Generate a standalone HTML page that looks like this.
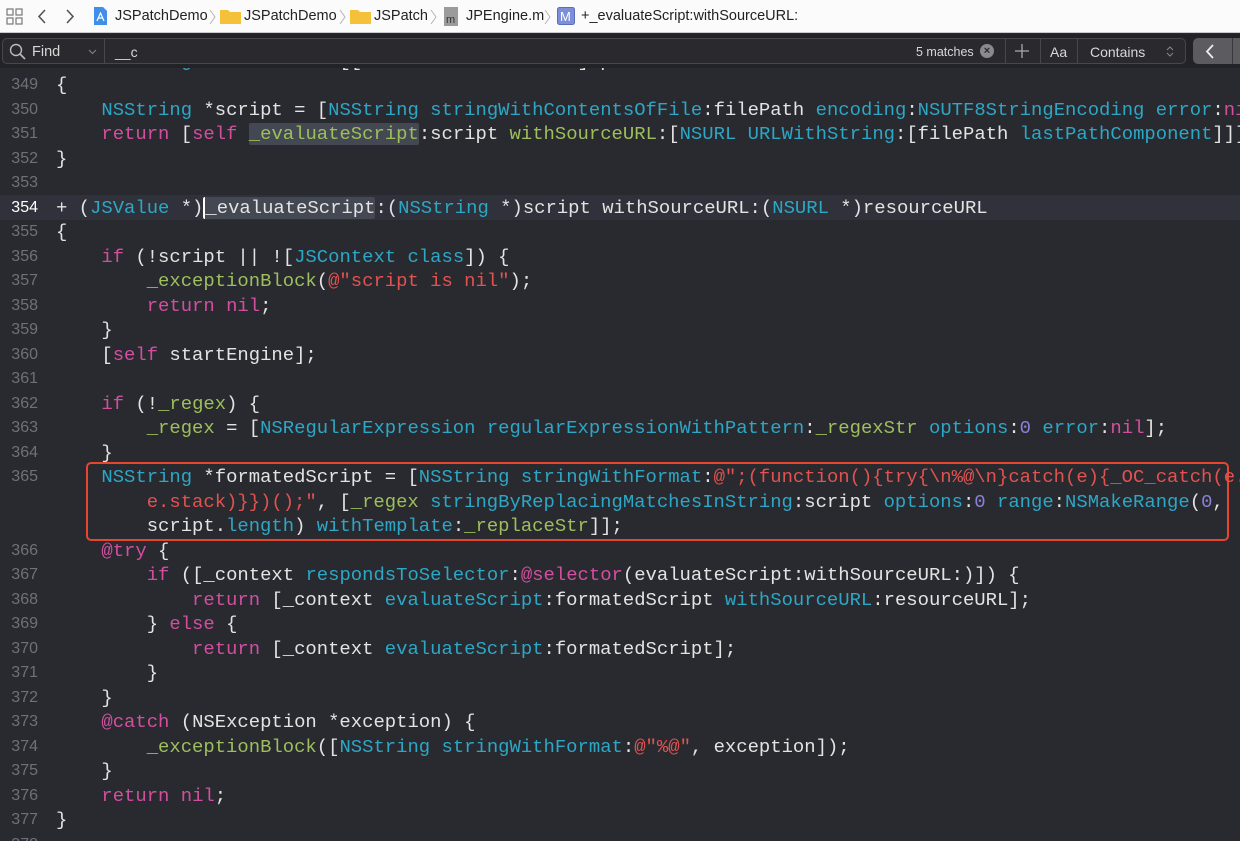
<!DOCTYPE html>
<html><head><meta charset="utf-8"><style>
*{margin:0;padding:0;box-sizing:border-box}
body{width:1240px;height:841px;overflow:hidden;background:#292a30;position:relative;font-family:"Liberation Sans",sans-serif}
#top{position:absolute;left:0;top:0;width:1240px;height:33px;background:#fbfbfb;border-bottom:1px solid #c9c9c9}
#top .tx{position:absolute;top:8px;font-size:14.5px;color:#222;white-space:nowrap}
#top .ch{position:absolute;top:9px;width:8px;height:16px}
#find{position:absolute;left:0;top:34px;width:1240px;height:34px;background:#232327}
#field{position:absolute;left:2px;top:4px;width:1184px;height:26px;border:1px solid #48484c;border-radius:5px;background:#2a2a2e}
#find .w{position:absolute;color:#d8d8d8;font-size:14px;top:10px;white-space:nowrap}
#code{position:absolute;left:0;top:68px;width:1240px;height:773px;overflow:hidden}
.l{position:absolute;left:0;width:1240px;height:24.5px;line-height:24.5px;white-space:pre;font-family:"Liberation Mono",monospace;font-size:18.9px;color:#e3e3e4}
.ln{position:absolute;left:0;width:38px;text-align:right;font-family:"Liberation Sans",sans-serif;font-size:16px;color:#6f7078}
.c{position:absolute;left:56px}
.k{color:#d24fa0}.t{color:#2ca7c6}.g{color:#9dbf5c}.s{color:#e2524f}.n{color:#8b80d6}
.hl{background:#444852;border-radius:2px}
</style></head><body>
<div id="top">
<svg style="position:absolute;left:6px;top:8px" width="17" height="17" viewBox="0 0 17 17" fill="none" stroke="#777" stroke-width="1.2"><rect x="1" y="1" width="6" height="6"/><rect x="10" y="1" width="6" height="6"/><rect x="1" y="10" width="6" height="6"/><rect x="10" y="10" width="6" height="6"/></svg>
<svg style="position:absolute;left:37px;top:9px" width="10" height="15" viewBox="0 0 10 15"><path d="M8 1L2 7.5L8 14" stroke="#555" stroke-width="1.6" fill="none"/></svg>
<svg style="position:absolute;left:65px;top:9px" width="10" height="15" viewBox="0 0 10 15"><path d="M2 1L8 7.5L2 14" stroke="#555" stroke-width="1.6" fill="none"/></svg>
<svg style="position:absolute;left:93px;top:6px" width="15" height="20" viewBox="0 0 15 20"><path d="M1 1H10L14 5V19H1Z" fill="#3f8ee8"/><path d="M4 15L7.5 7L11 15M5.5 12H9.5" stroke="#fff" stroke-width="1.2" fill="none"/></svg>
<span class="tx" style="left:115px">JSPatchDemo</span><svg class="ch" style="left:209px" viewBox="0 0 8 16"><path d="M1 1L6 8L1 15" stroke="#b5b5b5" fill="none"/></svg>
<svg style="position:absolute;left:220px;top:8px" width="21" height="16" viewBox="0 0 21 16"><path d="M0 2H8L10 4H21V16H0Z" fill="#f5c13a"/></svg>
<span class="tx" style="left:244px">JSPatchDemo</span><svg class="ch" style="left:339px" viewBox="0 0 8 16"><path d="M1 1L6 8L1 15" stroke="#b5b5b5" fill="none"/></svg>
<svg style="position:absolute;left:350px;top:8px" width="21" height="16" viewBox="0 0 21 16"><path d="M0 2H8L10 4H21V16H0Z" fill="#f5c13a"/></svg>
<span class="tx" style="left:374px">JSPatch</span><svg class="ch" style="left:430px" viewBox="0 0 8 16"><path d="M1 1L6 8L1 15" stroke="#b5b5b5" fill="none"/></svg>
<svg style="position:absolute;left:444px;top:7px" width="14" height="19" viewBox="0 0 14 19"><rect width="14" height="19" fill="#9b9b9b"/><text x="2" y="16" font-size="11" fill="#333" font-family="Liberation Sans">m</text></svg>
<span class="tx" style="left:466px">JPEngine.m</span><svg class="ch" style="left:544px" viewBox="0 0 8 16"><path d="M1 1L6 8L1 15" stroke="#b5b5b5" fill="none"/></svg>
<svg style="position:absolute;left:557px;top:7px" width="18" height="18" viewBox="0 0 18 18"><rect x=".5" y=".5" width="17" height="17" rx="2" fill="#7c8fd8" stroke="#5b6dbd"/><text x="3" y="14" font-size="13" fill="#fff" font-family="Liberation Sans">M</text></svg>
<span class="tx" style="left:581px">+_evaluateScript:withSourceURL:</span>
</div>
<div id="find">
<div id="field"></div>
<svg style="position:absolute;left:9px;top:9px" width="17" height="17" viewBox="0 0 17 17"><circle cx="7" cy="7" r="5.5" stroke="#bbb" stroke-width="1.4" fill="none"/><path d="M11 11L16 16" stroke="#bbb" stroke-width="1.6"/></svg>
<span class="w" style="left:32px;font-size:14.5px">Find</span>
<svg style="position:absolute;left:88px;top:15px" width="9" height="6" viewBox="0 0 9 6"><path d="M1 1L4.5 4.5L8 1" stroke="#888" fill="none"/></svg>
<div style="position:absolute;left:104px;top:5px;width:1px;height:25px;background:#48484c"></div>
<span class="w" style="left:115px">__c</span>
<span class="w" style="left:916px;font-size:12.5px;top:11px">5 matches</span>
<div style="position:absolute;left:980px;top:10px;width:14px;height:14px;border-radius:50%;background:#8a8a8e;color:#2a2a2e;font-size:11px;line-height:14px;text-align:center;font-weight:bold">×</div>
<div style="position:absolute;left:1005px;top:5px;width:1px;height:25px;background:#48484c"></div>
<svg style="position:absolute;left:1015px;top:10px" width="14" height="14" viewBox="0 0 14 14"><path d="M7 0V14M0 7H14" stroke="#aaa" stroke-width="1.3"/></svg>
<div style="position:absolute;left:1040px;top:5px;width:1px;height:25px;background:#48484c"></div>
<span class="w" style="left:1050px">Aa</span>
<div style="position:absolute;left:1077px;top:5px;width:1px;height:25px;background:#48484c"></div>
<span class="w" style="left:1090px">Contains</span>
<svg style="position:absolute;left:1166px;top:11px" width="8" height="13" viewBox="0 0 8 13"><path d="M1 5L4 2L7 5M1 8L4 11L7 8" stroke="#888" fill="none"/></svg>
<div style="position:absolute;left:1193px;top:4px;width:60px;height:26px;border-radius:5px;background:#5c5c60"></div>
<svg style="position:absolute;left:1205px;top:10px" width="10" height="15" viewBox="0 0 10 15"><path d="M8 1L2 7.5L8 14" stroke="#eee" stroke-width="1.8" fill="none"/></svg>
<div style="position:absolute;left:1232px;top:4px;width:1px;height:26px;background:#3a3a3e"></div>
</div>
<div id="code">
<div style="position:absolute;left:0;top:127px;width:1240px;height:25px;background:#2f323a"></div>
<div style="position:absolute;left:86px;top:394px;width:1143px;height:79px;border:2px solid #e8462c;border-radius:5px"></div>
<div class="l" style="top:-19.5px"><span class="ln">348</span><span class="c">    <span class="t">NSString</span> *filePath = [[<span class="t">NSBundle</span> <span class="t">mainBundle</span>] pathForResource</span></div>
<div class="l" style="top:5px"><span class="ln">349</span><span class="c">{</span></div>
<div class="l" style="top:29.5px"><span class="ln">350</span><span class="c">    <span class="t">NSString</span> *script = [<span class="t">NSString</span> <span class="t">stringWithContentsOfFile</span>:filePath <span class="t">encoding</span>:<span class="t">NSUTF8StringEncoding</span> <span class="t">error</span>:<span class="k">nil</span>];</span></div>
<div class="l" style="top:54px"><span class="ln">351</span><span class="c">    <span class="k">return</span> [<span class="k">self</span> <span class="g hl">_evaluateScript</span>:script <span class="g">withSourceURL</span>:[<span class="t">NSURL</span> <span class="t">URLWithString</span>:[filePath <span class="t">lastPathComponent</span>]]];</span></div>
<div class="l" style="top:78.5px"><span class="ln">352</span><span class="c">}</span></div>
<div class="l" style="top:103px"><span class="ln">353</span></div>
<div class="l" style="top:127.5px"><span class="ln" style="color:#fff">354</span><span class="c">+ (<span class="t">JSValue</span> *)<span class="hl" style="border-left:2px solid #fff">_evaluateScript</span>:(<span class="t">NSString</span> *)script withSourceURL:(<span class="t">NSURL</span> *)resourceURL</span></div>
<div class="l" style="top:152px"><span class="ln">355</span><span class="c">{</span></div>
<div class="l" style="top:176.5px"><span class="ln">356</span><span class="c">    <span class="k">if</span> (!script || ![<span class="t">JSContext</span> <span class="t">class</span>]) {</span></div>
<div class="l" style="top:201px"><span class="ln">357</span><span class="c">        <span class="g">_exceptionBlock</span>(<span class="s">@"script is nil"</span>);</span></div>
<div class="l" style="top:225.5px"><span class="ln">358</span><span class="c">        <span class="k">return</span> <span class="k">nil</span>;</span></div>
<div class="l" style="top:250px"><span class="ln">359</span><span class="c">    }</span></div>
<div class="l" style="top:274.5px"><span class="ln">360</span><span class="c">    [<span class="k">self</span> startEngine];</span></div>
<div class="l" style="top:299px"><span class="ln">361</span></div>
<div class="l" style="top:323.5px"><span class="ln">362</span><span class="c">    <span class="k">if</span> (!<span class="g">_regex</span>) {</span></div>
<div class="l" style="top:348px"><span class="ln">363</span><span class="c">        <span class="g">_regex</span> = [<span class="t">NSRegularExpression</span> <span class="t">regularExpressionWithPattern</span>:<span class="g">_regexStr</span> <span class="t">options</span>:<span class="n">0</span> <span class="t">error</span>:<span class="k">nil</span>];</span></div>
<div class="l" style="top:372.5px"><span class="ln">364</span><span class="c">    }</span></div>
<div class="l" style="top:397px"><span class="ln">365</span><span class="c">    <span class="t">NSString</span> *formatedScript = [<span class="t">NSString</span> <span class="t">stringWithFormat</span>:<span class="s">@";(function(){try{\n%@\n}catch(e){_OC_catch(e.message, </span></span></div>
<div class="l" style="top:421.5px"><span class="c"><span class="s">        e.stack)}})();"</span>, [<span class="g">_regex</span> <span class="t">stringByReplacingMatchesInString</span>:script <span class="t">options</span>:<span class="n">0</span> <span class="t">range</span>:<span class="t">NSMakeRange</span>(<span class="n">0</span>,</span></div>
<div class="l" style="top:446px"><span class="c">        script.<span class="t">length</span>) <span class="t">withTemplate</span>:<span class="g">_replaceStr</span>]];</span></div>
<div class="l" style="top:470.5px"><span class="ln">366</span><span class="c">    <span class="k">@try</span> {</span></div>
<div class="l" style="top:495px"><span class="ln">367</span><span class="c">        <span class="k">if</span> ([_context <span class="t">respondsToSelector</span>:<span class="k">@selector</span>(evaluateScript:withSourceURL:)]) {</span></div>
<div class="l" style="top:519.5px"><span class="ln">368</span><span class="c">            <span class="k">return</span> [_context <span class="t">evaluateScript</span>:formatedScript <span class="t">withSourceURL</span>:resourceURL];</span></div>
<div class="l" style="top:544px"><span class="ln">369</span><span class="c">        } <span class="k">else</span> {</span></div>
<div class="l" style="top:568.5px"><span class="ln">370</span><span class="c">            <span class="k">return</span> [_context <span class="t">evaluateScript</span>:formatedScript];</span></div>
<div class="l" style="top:593px"><span class="ln">371</span><span class="c">        }</span></div>
<div class="l" style="top:617.5px"><span class="ln">372</span><span class="c">    }</span></div>
<div class="l" style="top:642px"><span class="ln">373</span><span class="c">    <span class="k">@catch</span> (NSException *exception) {</span></div>
<div class="l" style="top:666.5px"><span class="ln">374</span><span class="c">        <span class="g">_exceptionBlock</span>([<span class="t">NSString</span> <span class="t">stringWithFormat</span>:<span class="s">@"%@"</span>, exception]);</span></div>
<div class="l" style="top:691px"><span class="ln">375</span><span class="c">    }</span></div>
<div class="l" style="top:715.5px"><span class="ln">376</span><span class="c">    <span class="k">return</span> <span class="k">nil</span>;</span></div>
<div class="l" style="top:740px"><span class="ln">377</span><span class="c">}</span></div>
<div class="l" style="top:764.5px"><span class="ln">378</span></div>
</div>
</body></html>
